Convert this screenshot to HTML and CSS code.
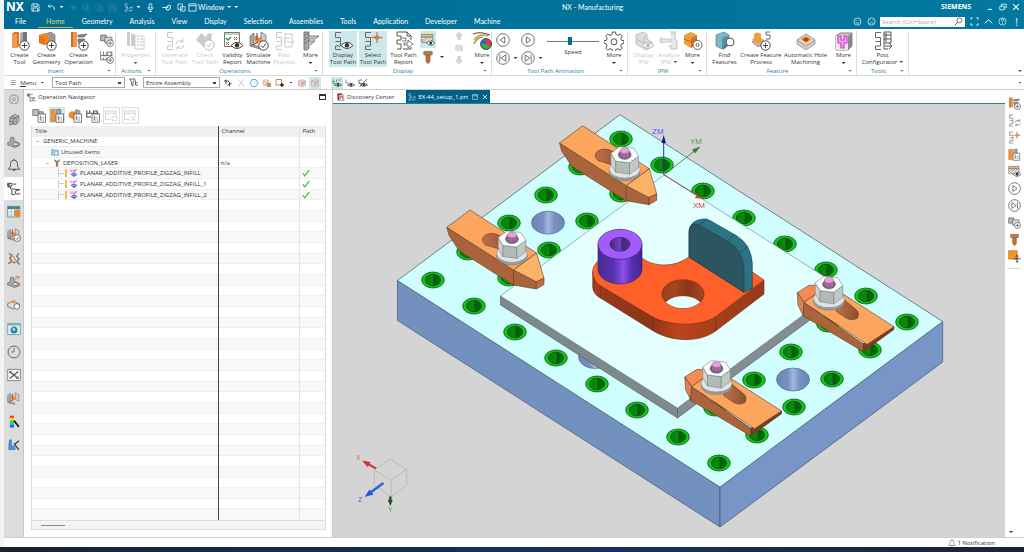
FILE: index.html
```html
<!DOCTYPE html>
<html lang="en">
<head>
<meta charset="utf-8">
<title>NX - Manufacturing</title>
<link rel="stylesheet" href="styles.css">
</head>
<body>
<svg class="sprite" aria-hidden="true">
  <symbol id="plus" viewBox="0 0 20 20"><circle cx="14.5" cy="14.5" r="4.7" fill="#fff" stroke="#444"/><path d="M14.5 11.8v5.4M11.8 14.5h5.4" stroke="#444" fill="none"/></symbol>
  <symbol id="eye" viewBox="0 0 20 20"><path d="M8 14.5q6-6.500 12 0q-6 6-12 0z" fill="#fff" stroke="#444"/><circle cx="14" cy="14.300" r="2.200" fill="#333"/></symbol>
  <symbol id="snake" viewBox="0 0 20 20"><path d="M8 1.500H2.500V6.500H7.500V10.500H2.500M7.500 10.500V15H2.500V18.500H8" fill="none" stroke="currentColor" stroke-width="1"/></symbol>
  <symbol id="tool" viewBox="0 0 20 20"><path d="M2 3l2-2h5v14l-2 2H2z" fill="#d9762a"/><path d="M2 3h5v14H2z" fill="#f09a4c"/><path d="M10 2l3-1h4v9l-3 4h-4z" fill="#aaa"/><path d="M13 1h4v9h-4z" fill="#777"/><use href="#plus"/></symbol>
  <symbol id="geometry" viewBox="0 0 20 20"><path d="M8 3l6-2 4 3v8l-6 3-4-3z" fill="#999" stroke="#666" stroke-width=".6"/><path d="M2 4l6-2 4 3v6l-4 3-6-2z" fill="#f5881f"/><path d="M2 4l6 3v7l-6-2z" fill="#e77512"/><use href="#plus"/></symbol>
  <symbol id="operation" viewBox="0 0 20 20"><path d="M2 1h6v15H2z" fill="#ee9550"/><path d="M2 1h2v15H2z" fill="#d06d25"/><path d="M9 4l9-1-3 3H9zM9 8h7l-5 3H9z" fill="#888" stroke="#555" stroke-width=".6"/><path d="M9 12h5" stroke="#666"/><use href="#plus"/></symbol>
  <symbol id="method" viewBox="0 0 20 20"><path d="M1 3h8v8H1z" fill="#bbb" stroke="#555"/><path d="M7 6h10v8H7z" fill="#ddd" stroke="#555"/><use href="#plus"/></symbol>
  <symbol id="grid" viewBox="0 0 20 20"><path d="M1 2v12M1 8h16M5 2v6h5V3M10 8V3h6v5M1 14h9M5 11v3M9 11v3M17 2v7" fill="none" stroke="#666" stroke-width="1.200"/><use href="#plus"/></symbol>
  <symbol id="properties" viewBox="0 0 20 20"><path d="M1 1h3v14H1zM5 3h4v12H5z" fill="#ccc"/><path d="M9 5h9v13H9z" fill="#fff" stroke="#ccc"/><path d="M11 8h2M11 11h2M11 14h2M14 8h3M14 11h3M14 14h3" stroke="#bbb"/></symbol>
  <symbol id="generate" viewBox="0 0 20 20"><use href="#snake"/><path d="M11 13a4 4 0 0 1 7-2V8M18 11h-3M19 14a4 4 0 0 1-7 2v3M12 16h3" fill="none" stroke="currentColor"/></symbol>
  <symbol id="check" viewBox="0 0 20 20"><path d="M1 9l5-7 5 4 2-4 4 1-1 8-7 5z" fill="#ccc"/><circle cx="14" cy="14" r="5" fill="#fff" stroke="#bbb"/><path d="M11.500 14l2 2 3-4" fill="none" stroke="#bbb"/></symbol>
  <symbol id="validity" viewBox="0 0 20 20"><path d="M1.500 1.500h15v14h-15z" fill="#fff" stroke="#777"/><path d="M2 2h14v2H2z" fill="#ccc"/><path d="M3 7l2 2 3-3" fill="none" stroke="#27a34a" stroke-width="1.500"/><path d="M11 6l3 3m0-3l-3 3M3 11l3 3m0-3l-3 3" stroke="#cf3838"/><use href="#eye"/></symbol>
  <symbol id="machine" viewBox="0 0 20 20"><path d="M1 5l4-3v12l6 2v2l-10-3z" fill="#aaa" stroke="#666" stroke-width=".7"/><path d="M12 1l5 3v9l-5-2z" fill="#ccc" stroke="#666" stroke-width=".7"/><path d="M5 6l3-2 2 3 3-2v5l-6 3z" fill="#ee8840"/><path d="M8 2v7M2 15l7-4" stroke="#555"/></symbol>
  <symbol id="simulate" viewBox="0 0 20 20"><use href="#machine"/><circle cx="14.500" cy="14.500" r="4.700" fill="#fff" stroke="#444"/><path d="M12 14.500l2 2 3-4" fill="none" stroke="#444"/></symbol>
  <symbol id="post" viewBox="0 0 20 20"><use href="#snake"/><path d="M11 3h7v6M11 3v13h7v-3M11 7h5M13 11h7l-2-2m2 2l-2 2" fill="none" stroke="currentColor"/></symbol>
  <symbol id="opmore" viewBox="0 0 20 20"><path d="M3 1h5v16l-2 2H3z" fill="#aaa" stroke="#666" stroke-width=".8"/><path d="M8 5h10l-4 3H8M8 10h6l-5 4" fill="#ccc" stroke="#666" stroke-width=".8"/><path d="M3 5l5-3M3 9l5-4M3 13l5-4" stroke="#666" stroke-width=".8"/></symbol>
  <symbol id="showpath" viewBox="0 0 20 20"><use href="#snake"/><use href="#eye"/></symbol>
  <symbol id="selectpath" viewBox="0 0 20 20"><use href="#snake"/><path d="M14 1v11M8.500 6.500h11" stroke="#e17a2d" stroke-width="1.300"/><circle cx="14" cy="6.500" r="2" fill="none" stroke="#777" stroke-width=".7"/></symbol>
  <symbol id="report" viewBox="0 0 20 20"><path d="M9 1H3v4h4v4H3v4h4v5H3M9 1h4l4 4v4M13 1v4h4M17 16v2H9" fill="none" stroke="#555"/><path d="M8 7h4v3H8M10 12h4V9l5 4-5 4v-3h-4z" fill="#fff" stroke="#555" stroke-width=".8"/></symbol>
  <symbol id="ipweye" viewBox="0 0 20 20"><path d="M1 2h16v4H1z" fill="#f5b36a" stroke="#777"/><path d="M1 6h16v9l-16-2z" fill="#eee" stroke="#777"/><path d="M2 11l5-5M2 14l9-8M7 14l8-8M12 14l5-5" stroke="#777"/><use href="#eye"/></symbol>
  <symbol id="bolt" viewBox="0 0 20 20"><path d="M4 2h12v5H4z" fill="#dd7b38" stroke="#555" stroke-width=".8"/><path d="M7 7h6v9l-2 3H9l-2-3z" fill="#cf6b29" stroke="#555" stroke-width=".6"/><path d="M4 4h12M7 9h6" stroke="#777"/></symbol>
  <symbol id="gauge" viewBox="0 0 20 20"><path d="M1 3q7-3 17 1" stroke="#444" fill="none"/><path d="M2 9q5-7 14-4" stroke="#f28c2a" stroke-width="1.500" fill="none"/><path d="M2 13q3-7 9-7" stroke="#77b539" stroke-width="1.500" fill="none"/><circle cx="14" cy="13" r="5.500" fill="#2f65d8"/><path d="M14 13V7.500A5.500 5.500 0 0 1 18.800 15.800z" fill="#e33"/><path d="M14 13L18.800 15.800A5.500 5.500 0 0 1 8.500 13z" fill="#2fae4a"/><circle cx="14" cy="13" r="5.500" fill="none" stroke="#444" stroke-width=".8"/></symbol>
  <symbol id="play" viewBox="0 0 20 20"><circle cx="10" cy="10" r="9" fill="#fff" stroke="#555" stroke-width="1.200"/><path d="M7.500 5.500v9l6.500-4.500z" fill="none" stroke="#555" stroke-width="1.200"/></symbol>
  <symbol id="next" viewBox="0 0 20 20"><circle cx="10" cy="10" r="9" fill="#fff" stroke="#555" stroke-width="1.200"/><path d="M6 5.500v9l6.500-4.500zM14.500 5v10" fill="none" stroke="#555" stroke-width="1.200"/></symbol>
  <symbol id="gear" viewBox="0 0 20 20"><path d="M8.500 1h3l.5 2.600 2 .8L16.300 3l2 2-1.500 2.300.8 2 2.400.5v2.500l-2.500.7-.8 1.900 1.400 2.200-2 2-2.100-1.400-2 .8-.5 2h-3l-.5-2-2-.8-2.300 1.400-2-2 1.400-2.200-.8-1.900L0 12.300V9.800l2.400-.5.8-2L1.700 5l2-2L6 4.400l2-.8z" fill="none" stroke="#555"/><circle cx="10" cy="10.800" r="3" fill="none" stroke="#555"/></symbol>
  <symbol id="block" viewBox="0 0 20 20"><path d="M2 4l7-3 4 2v5l5 3v5l-6 3L2 13z" fill="#ddd" stroke="#c4c4c4"/><path d="M2 8l8 4V7l3-2" fill="none" stroke="#bbb"/><path d="M8 14.500q6-6 12 0q-6 6-12 0z" fill="#f6f6f6" stroke="#bbb"/><circle cx="14" cy="14.500" r="2" fill="#bbb"/></symbol>
  <symbol id="analyze" viewBox="0 0 20 20"><path d="M1 8h11v3H1zM12 2h4v5l2 4v7h-6v-3M11 1h7M3 8v-2M3 11v2M9 15h4" fill="#e8e8e8" stroke="#c4c4c4"/></symbol>
  <symbol id="ipwmore" viewBox="0 0 20 20"><path d="M1 4l7-3 6 3v9l-6 4-7-4z" fill="#f39a45"/><path d="M8 7l6-3v9l-6 4z" fill="#d9731f"/><path d="M1 8l7 3 6-3" stroke="#b9682c" fill="none"/><circle cx="14.500" cy="14" r="4.500" fill="#fff" stroke="#666"/><circle cx="14.500" cy="14" r="1.500" fill="none" stroke="#666"/></symbol>
  <symbol id="find" viewBox="0 0 20 20"><path d="M1 4l8-3 5 3v10l-7 4-6-3z" fill="#7fb7c6" stroke="#5a7f8c" stroke-width=".7"/><path d="M7 7l7-3v10l-7 4z" fill="#4f93a6"/><circle cx="15" cy="11" r="4" fill="#fff" stroke="#555"/><path d="M12 14l-4 4" stroke="#555" stroke-width="1.500"/></symbol>
  <symbol id="feature" viewBox="0 0 20 20"><path d="M1 11l6-3 7 3-7 5z" fill="#bbb" stroke="#777" stroke-width=".7"/><path d="M3 3q3-3 7 0v4l3 2-6 4-6-4 2-2z" fill="#f09c3d"/><path d="M19 1h-4v3h4v4h-4" fill="none" stroke="#666"/><use href="#plus"/></symbol>
  <symbol id="hole" viewBox="0 0 20 20"><path d="M1 9l9-6 9 6v4l-9 6-9-6z" fill="#ccc" stroke="#888" stroke-width=".7"/><path d="M1 9l9-6 9 6-9 6z" fill="#f3d3b8" stroke="#888" stroke-width=".7"/><path d="M5 8l5-3 5 3-5 4z" fill="#eb7f35"/><ellipse cx="10" cy="8.500" rx="2.500" ry="1.600" fill="#8a4a1d"/></symbol>
  <symbol id="pocket" viewBox="0 0 20 20"><path d="M2 5l4-3h12v13l-4 4H2z" fill="#ccc" stroke="#666" stroke-width=".8"/><path d="M2 5h12v14H2z" fill="#efe4f0"/><path d="M4 5v7h3v5h3v-5h3V5h-3v4H7V5z" fill="#f3a6ea" stroke="#d33ec4" stroke-width="1.200"/><path d="M14 5l4-3v13l-4 4z" fill="#888"/></symbol>
  <symbol id="postconf" viewBox="0 0 20 20"><use href="#snake"/><path d="M11 1h7v11h-7zM11 4h7M11 8h7M13 2v9M11 12v6h4M12 15h7l-3-3m3 3l-3 3" fill="none" stroke="#555"/></symbol>
  <symbol id="cube" viewBox="0 0 20 20"><path d="M4 8l7-5 6 3v7l-4 5-4-1-5 2z" fill="#bbb" stroke="#666"/><path d="M4 8l5 2 8-4M9 10v8M7 6l6 3v8M4 13l5 2" fill="none" stroke="#555"/></symbol>
  <symbol id="part" viewBox="0 0 20 20"><path d="M1 11l4-2V4q2-2 5 0v4l8 4v3l-7 3-10-4z" fill="#aaa" stroke="#666"/><ellipse cx="12" cy="13" rx="4" ry="2" fill="#eee" stroke="#555"/></symbol>
  <symbol id="bell" viewBox="0 0 20 20"><path d="M2 16h16l-3-4V8a5 5 0 0 0-10 0v4zM8 16a2 2 0 0 0 4 0M10 1v2" fill="none" stroke="#444" stroke-width="1.200"/></symbol>
  <symbol id="opnav" viewBox="0 0 20 20"><path d="M1 2h6v4H1zM1 7h4v3M9 3h4M7 9v9h4M8 10l10 1-6 2v4h7" fill="none" stroke="#444" stroke-width="1.400"/><path d="M1 2h3v4H1z" fill="#666"/></symbol>
  <symbol id="table" viewBox="0 0 20 20"><path d="M1 2h17v15H1z" fill="#fff" stroke="#357f94"/><path d="M1 2h17v4H1z" fill="#357f94"/><path d="M6 2v15M11 2v15M1 10h17M1 14h17" stroke="#88aeb8"/><path d="M10 8l5-2 4 3v7l-5 2-4-3z" fill="#e68a36"/></symbol>
  <symbol id="web" viewBox="0 0 20 20"><path d="M1 2h18v16H1z" fill="#e4eff2" stroke="#608c99"/><path d="M1 2h18v3H1z" fill="#7bafbd"/><circle cx="10" cy="11.500" r="5" fill="#2588a3"/><path d="M8 8l4 2-1 3-3-1z" fill="#bde0e8"/></symbol>
  <symbol id="clock" viewBox="0 0 20 20"><circle cx="10" cy="10" r="8.500" fill="none" stroke="#555" stroke-width="1.200"/><path d="M10 4v6H6" fill="none" stroke="#555" stroke-width="1.200"/></symbol>
  <symbol id="wrench" viewBox="0 0 20 20"><path d="M1 2h18v16H1z" fill="#f4f4f4" stroke="#666"/><path d="M4 5l12 10M16 5L4 15" stroke="#555" stroke-width="1.600"/><circle cx="5" cy="6" r="2" fill="#777"/><circle cx="15" cy="14" r="2" fill="#777"/></symbol>
  <symbol id="robots" viewBox="0 0 20 20"><path d="M3 2l4 3-3 4 3 4-5 4M17 2l-3 4 3 4-3 4 4 4M8 15h4" fill="none" stroke="#777" stroke-width="2"/><path d="M7 4l3 4M10 8l3 5" stroke="#ee8840" stroke-width="1.600"/></symbol>
  <symbol id="partarrow" viewBox="0 0 20 20"><use href="#part"/><path d="M9 9l8-7M12 2h5v4" fill="none" stroke="#ee8840" stroke-width="1.500"/></symbol>
  <symbol id="partfind" viewBox="0 0 20 20"><path d="M1 8l8-4 9 5-9 7-8-4z" fill="#ddd" stroke="#555"/><path d="M5 6l5-4 3 4-4 2z" fill="#ee9950"/><circle cx="14" cy="12" r="4" fill="#fff" stroke="#444"/></symbol>
  <symbol id="spectrum" viewBox="0 0 20 20"><path d="M4 1h6v4H4z" fill="#f33"/><path d="M4 4h6v4H4z" fill="#fc2"/><path d="M4 8h6v4H4z" fill="#3d3"/><path d="M4 11h6v4H4z" fill="#2cc"/><path d="M4 14h6v4H4z" fill="#36f"/><path d="M10 8l7 9" stroke="#222" stroke-width="2.500"/></symbol>
  <symbol id="bluepart" viewBox="0 0 20 20"><path d="M3 2h4v8l5 2v5H2v-6z" fill="#4b8dd1"/><path d="M10 8l7 9M11 9l6-5" stroke="#345" stroke-width="2"/></symbol>
  <symbol id="orangemove" viewBox="0 0 20 20"><path d="M1 1h13v13H1z" fill="#f7941e" stroke="#b96a1c"/><path d="M14 8v11M8.500 13.500h11M12 10l2-2 2 2M12 17l2 2 2-2" stroke="#444" stroke-width="1.400" fill="none"/></symbol>
  <symbol id="pathlist" viewBox="0 0 20 20"><path d="M8 8h10v11H8z" fill="#fff" stroke="#555"/><path d="M11 10v6h2M11 13h2M14 13h2M14 16h2" stroke="#555" fill="none"/></symbol>
  <symbol id="nav1" viewBox="0 0 20 20"><path d="M1 2h8v8H1zM9 5h6v6H9z" fill="#bbb" stroke="#666"/><use href="#pathlist"/></symbol>
  <symbol id="nav2" viewBox="0 0 20 20"><path d="M1 2h6v16H1z" fill="#ee9140" stroke="#b9681f" stroke-width=".6"/><path d="M9 2h5v7H9z" fill="#aaa" stroke="#666"/><use href="#pathlist"/></symbol>
  <symbol id="nav3" viewBox="0 0 20 20"><path d="M1 7l4-3 3 1 3-3 5 2v8l-8 4-7-4z" fill="#f08c2e"/><path d="M11 2l5 2v5h-5z" fill="#aaa" stroke="#777"/><use href="#pathlist"/></symbol>
  <symbol id="nav4" viewBox="0 0 20 20"><path d="M1 3v10M1 7h16M5 3v4h5V4h5v4M1 12h6" fill="none" stroke="#555" stroke-width="1.500"/><use href="#pathlist"/></symbol>
  <symbol id="nav5" viewBox="0 0 20 20"><path d="M2 4h14v7M2 4v11h7M2 7h14" fill="none" stroke="#c4c4c4"/><circle cx="14" cy="14" r="3.500" fill="none" stroke="#c4c4c4"/></symbol>
  <symbol id="nav6" viewBox="0 0 20 20"><path d="M2 4h14v6M2 4v11h7M2 7h14M11 11l6 6m0-6l-6 6" fill="none" stroke="#c4c4c4"/></symbol>
  <symbol id="save" viewBox="0 0 20 20"><path d="M2 2h13l3 3v13H2zM6 2v6h8V2M5 18v-7h10v7" fill="none" stroke="currentColor" stroke-width="1.600"/></symbol>
  <symbol id="undo" viewBox="0 0 20 20"><path d="M7 3L3 7l4 4M3 7h9q6 1 4 9" fill="none" stroke="currentColor" stroke-width="1.800"/></symbol>
  <symbol id="copy" viewBox="0 0 20 20"><path d="M2 2h10v12H2zM8 8h10v10H8z" fill="none" stroke="currentColor" stroke-width="1.600"/></symbol>
  <symbol id="mic" viewBox="0 0 20 20"><path d="M7 2h6v9H7zM4 9q0 6 6 6t6-6M10 15v4M7 19h6" fill="none" stroke="currentColor" stroke-width="1.600"/></symbol>
  <symbol id="hand" viewBox="0 0 20 20"><path d="M1 10h7l7-5q4-1 4 4-1 6-6 7-5 0-4-5 2-3 5-1" fill="none" stroke="currentColor" stroke-width="2.200"/></symbol>
  <symbol id="window" viewBox="0 0 20 20"><path d="M2 2h16v16H2zM2 6h16" fill="none" stroke="currentColor" stroke-width="1.700"/></symbol>
  <symbol id="cut" viewBox="0 0 20 20"><path d="M3 10h14M10 3v14M5 5l10 10" stroke="currentColor" stroke-width="1.600"/></symbol>
  <symbol id="smile" viewBox="0 0 20 20"><circle cx="10" cy="10" r="8" fill="none" stroke="currentColor" stroke-width="1.500"/><path d="M6 7.500h2M12 7.500h2M5.500 12q4.500 4 9 0" fill="none" stroke="currentColor" stroke-width="1.500"/></symbol>
  <symbol id="sad" viewBox="0 0 20 20"><circle cx="10" cy="10" r="8" fill="none" stroke="currentColor" stroke-width="1.500"/><path d="M6 7.500h2M12 7.500h2M5.500 14.500q4.500-5 9 0" fill="none" stroke="currentColor" stroke-width="1.500"/></symbol>
  <symbol id="glass" viewBox="0 0 20 20"><circle cx="12" cy="7.500" r="5.500" fill="none" stroke="#444" stroke-width="1.600"/><path d="M8 12l-6 6" stroke="#444" stroke-width="2"/></symbol>
  <symbol id="full" viewBox="0 0 20 20"><path d="M2 6V2h4M14 2h4v4M18 14v4h-4M6 18H2v-4" fill="none" stroke="currentColor" stroke-width="2"/></symbol>
  <symbol id="up" viewBox="0 0 20 20"><path d="M2 14l8-8 8 8" fill="none" stroke="currentColor" stroke-width="2.200"/></symbol>
  <symbol id="help" viewBox="0 0 20 20"><circle cx="10" cy="10" r="8" fill="none" stroke="currentColor" stroke-width="1.500"/><path d="M7 8q0-3 3-3t3 2.500q0 1.500-3 3V12M10 13.500v2" fill="none" stroke="currentColor" stroke-width="1.600"/></symbol>
  <symbol id="close" viewBox="0 0 20 20"><path d="M3 3l14 14M17 3L3 17" stroke="currentColor" stroke-width="2.600"/></symbol>
  <symbol id="min" viewBox="0 0 20 20"><path d="M5 16h10" stroke="currentColor" stroke-width="2.500"/></symbol>
  <symbol id="restore" viewBox="0 0 20 20"><path d="M6 7V3h12v9h-4M2 8h11v9H2z" fill="none" stroke="currentColor" stroke-width="2"/></symbol>
  <symbol id="filter" viewBox="0 0 20 20"><path d="M1 2h11L8 8v8l-3-2V8zM13 5v9h5M13 9h4" fill="none" stroke="#444" stroke-width="1.600"/></symbol>
  <symbol id="snap" viewBox="0 0 20 20"><path d="M2 6h9M6 3v9M10 6l4 4M9 14l8-3M13 8v9" stroke="#444" stroke-width="2"/></symbol>
  <symbol id="wand" viewBox="0 0 20 20"><path d="M3 3l4 4M15 3L5 17M8 8l9 9" stroke="#ccc" stroke-width="2"/></symbol>
  <symbol id="hex" viewBox="0 0 20 20"><path d="M6 3h8l4 7-4 7H6l-4-7z" fill="#f4fbff" stroke="#3aa0cf" stroke-width="1.600"/></symbol>
  <symbol id="cubes" viewBox="0 0 20 20"><path d="M2 6l6-3 6 3v7l-6 3-6-3z" fill="#f3e3d6" stroke="#b98a68"/><path d="M2 6l6 3 6-3M8 9v7" fill="none" stroke="#b98a68"/><path d="M11 11h6v6h-6z" fill="#ef8c35" stroke="#555"/></symbol>
  <symbol id="box" viewBox="0 0 20 20"><path d="M2 3h11v11H2z" fill="#fff" stroke="#e28138" stroke-width="2"/><path d="M14 10v8M10 14h8" stroke="#333" stroke-width="3"/></symbol>
  <symbol id="iso" viewBox="0 0 20 20"><path d="M3 6l7-3 7 3v9l-7 3-7-3z" fill="#ddd" stroke="#999"/><path d="M3 6l7 3 7-3" fill="none" stroke="#999"/><path d="M8 8l7-2v7l-7 3z" fill="#e6ad8e"/></symbol>
  <symbol id="pathseye" viewBox="0 0 20 20"><path d="M2 3v8h5M2 7h4M9 3v5M12 4h6" fill="none" stroke="#2b8a70" stroke-width="1.500"/><path d="M5 14q7-7 14 0q-7 6-14 0z" fill="#fff" stroke="#333" stroke-width="1.500"/><circle cx="12" cy="13.500" r="2.500" fill="#333"/></symbol>
  <symbol id="patheye" viewBox="0 0 20 20"><path d="M2 3v7h5" fill="none" stroke="#2b8a70" stroke-width="1.500"/><path d="M5 14q7-7 14 0q-7 6-14 0z" fill="#fff" stroke="#333" stroke-width="1.500"/><circle cx="12" cy="13.500" r="2.500" fill="#333"/></symbol>
  <symbol id="hideeye" viewBox="0 0 20 20"><path d="M2 4v7h5M3 4h5M18 2L3 18" fill="none" stroke="#444" stroke-width="1.600"/><path d="M5 14q7-7 14 0q-7 6-14 0z" fill="none" stroke="#333" stroke-width="1.500"/><circle cx="12" cy="13.500" r="2.500" fill="#333"/></symbol>
  <symbol id="disc" viewBox="0 0 20 20"><path d="M1 1h12v17H1z" fill="#b4213c"/><path d="M5 5h12v14H5z" fill="#eee" stroke="#773344"/><path d="M8 16V9h6v7" fill="none" stroke="#933" stroke-width="2"/></symbol>
  <symbol id="folder" viewBox="0 0 20 20"><path d="M1 4h7l2 2h9v12H1z" fill="#9fd0e2" stroke="#3c8198"/><path d="M9 8h8v10H9z" fill="#e7f4f8" stroke="#3c8198"/></symbol>
  <symbol id="laser" viewBox="0 0 20 20"><path d="M4 1v4l4 3v11h4V8l4-3V1l-4 4H8z" fill="#a06a40" stroke="#553" stroke-width=".8"/></symbol>
  <symbol id="additive" viewBox="0 0 20 20"><path d="M2 1v5h4M8 1v5h4V1M14 6V2h4" fill="none" stroke="#e04a9a" stroke-width="1.800"/><path d="M2 11l8 5 8-5v3l-8 6-8-6z" fill="#2b53d6"/><path d="M4 11l6-3 6 3-6 4z" fill="#7a68e2"/></symbol>
  <symbol id="done" viewBox="0 0 20 20"><path d="M2 11l5 6L18 3" fill="none" stroke="#35bf43" stroke-width="3"/></symbol>
  <symbol id="ghostup" viewBox="0 0 20 20"><path d="M10 2l7 7h-4v8H7V9H3z" fill="#d4d4d4" stroke="#c0c0c0"/></symbol>
  <symbol id="ghostbox" viewBox="0 0 20 20"><path d="M3 5l9-1 5 3v8l-9 1-5-3z" fill="#ddd" stroke="#c4c4c4"/></symbol>
</svg>

<div class="app">
  <header class="top">
    <div class="titlebar">
      <div class="quick">
        <span class="logo">NX</span>
        <button class="q" aria-label="Save"><svg><use href="#save"/></svg></button>
        <button class="q undo" aria-label="Undo"><svg><use href="#undo"/></svg><i class="caret"></i></button>
        <button class="q dim" aria-label="Cut"><svg><use href="#cut"/></svg></button>
        <button class="q dim" aria-label="Copy"><svg><use href="#copy"/></svg></button>
        <button class="q dim" aria-label="Paste"><svg><use href="#copy"/></svg></button>
        <button class="q dim" aria-label="Repeat"><svg><use href="#save"/></svg></button>
        <button class="q undo" aria-label="Tool path"><svg><use href="#generate"/></svg><i class="caret"></i></button>
        <button class="q" aria-label="Voice"><svg><use href="#mic"/></svg></button>
        <button class="q wide" aria-label="Touch"><svg><use href="#hand"/></svg></button>
        <button class="q" aria-label="Switch window"><svg><use href="#copy"/></svg></button>
        <button class="winmenu"><svg><use href="#window"/></svg>Window<i class="caret"></i></button>
        <i class="caret"></i>
      </div>
      <div class="apptitle">NX - Manufacturing</div>
      <div class="brand">SIEMENS</div>
      <button class="wc" aria-label="Minimize"><svg><use href="#min"/></svg></button>
      <button class="wc" aria-label="Restore"><svg><use href="#restore"/></svg></button>
      <button class="wc" aria-label="Close"><svg><use href="#close"/></svg></button>
    </div>
    <div class="tabbar">
      <nav class="tabs">
        <a href="#" class="file">File</a><a href="#" class="on">Home</a><a href="#">Geometry</a><a href="#">Analysis</a><a href="#">View</a><a href="#">Display</a><a href="#">Selection</a><a href="#">Assemblies</a><a href="#">Tools</a><a href="#">Application</a><a href="#">Developer</a><a href="#">Machine</a>
      </nav>
      <button class="h" aria-label="Like"><svg><use href="#smile"/></svg></button>
      <button class="h" aria-label="Dislike"><svg><use href="#sad"/></svg></button>
      <label class="search"><input type="text" aria-label="Search" placeholder="Search (Ctrl+Space)"><svg><use href="#glass"/></svg></label>
      <button class="h" aria-label="Full screen"><svg><use href="#full"/></svg></button>
      <button class="h" aria-label="Minimize ribbon"><svg><use href="#up"/></svg></button>
      <button class="h" aria-label="Help"><svg><use href="#help"/></svg></button>
      <button class="h last" aria-label="Alerts">!</button>
    </div>
  </header>

  <div class="ribbon">
    <section class="group g-insert">
      <div class="body">
        <button class="rb"><svg><use href="#tool"/></svg>Create<br>Tool</button>
        <button class="rb"><svg><use href="#geometry"/></svg>Create<br>Geometry</button>
        <button class="rb"><svg><use href="#operation"/></svg>Create<br>Operation</button>
        <div class="stack"><button aria-label="Create Method"><svg><use href="#method"/></svg></button><button aria-label="Create Program"><svg><use href="#grid"/></svg></button></div>
      </div>
      <footer><span>Insert</span><i class="caret"></i></footer>
    </section>
    <section class="group g-actions">
      <div class="body"><button class="rb off"><svg><use href="#properties"/></svg>Properties<i class="caret"></i></button></div>
      <footer><span>Actions</span><i class="caret"></i></footer>
    </section>
    <section class="group g-operations">
      <div class="body">
        <button class="rb off"><svg><use href="#generate"/></svg>Generate<br>Tool Path</button>
        <button class="rb off"><svg><use href="#check"/></svg>Check<br>Tool Path</button>
        <button class="rb"><svg><use href="#validity"/></svg>Validity<br>Report</button>
        <button class="rb"><svg><use href="#simulate"/></svg>Simulate<br>Machine</button>
        <button class="rb off"><svg><use href="#post"/></svg>Post<br>Process</button>
        <button class="rb"><svg><use href="#opmore"/></svg>More<i class="caret"></i></button>
      </div>
      <footer><span>Operations</span><i class="caret"></i></footer>
    </section>
    <section class="group g-display">
      <div class="body">
        <button class="rb lit"><svg><use href="#showpath"/></svg>Display<br>Tool Path</button>
        <button class="rb lit"><svg><use href="#selectpath"/></svg>Select<br>Tool Path</button>
        <button class="rb"><svg><use href="#report"/></svg>Tool Path<br>Report</button>
        <div class="stack"><button class="lit" aria-label="Show IPW"><svg><use href="#ipweye"/></svg></button><button aria-label="Show tool"><svg><use href="#bolt"/></svg></button></div>
        <i class="caret low"></i>
        <div class="arrows"><svg><use href="#ghostup"/></svg><svg><use href="#ghostbox"/></svg><svg class="down"><use href="#ghostup"/></svg></div>
        <button class="rb"><svg><use href="#gauge"/></svg>More<i class="caret"></i></button>
      </div>
      <footer><span>Display</span><i class="caret"></i></footer>
    </section>
    <section class="group g-animation">
      <div class="body">
        <div class="player">
          <button aria-label="Play backward"><svg class="flip"><use href="#play"/></svg></button><i></i>
          <button aria-label="Play"><svg><use href="#play"/></svg></button><i></i>
          <button aria-label="Previous"><svg class="flip"><use href="#next"/></svg></button><i class="caret"></i>
          <button aria-label="Next"><svg><use href="#next"/></svg></button><i class="caret"></i>
        </div>
        <label class="speed"><input type="range" min="0" max="100" value="44">Speed</label>
        <button class="rb"><svg><use href="#gear"/></svg>More<i class="caret"></i></button>
      </div>
      <footer><span>Tool Path Animation</span><i class="caret"></i></footer>
    </section>
    <section class="group g-ipw">
      <div class="body">
        <button class="rb off"><svg><use href="#block"/></svg>Display<br>IPW</button>
        <button class="rb off"><svg><use href="#analyze"/></svg>Analyze<br><span>IPW<i class="caret in"></i></span></button>
        <button class="rb"><svg><use href="#ipwmore"/></svg>More<i class="caret"></i></button>
      </div>
      <footer><span>IPW</span><i class="caret"></i></footer>
    </section>
    <section class="group g-feature">
      <div class="body">
        <button class="rb"><svg><use href="#find"/></svg>Find<br>Features</button>
        <button class="rb"><svg><use href="#feature"/></svg>Create Feature<br>Process</button>
        <button class="rb"><svg><use href="#hole"/></svg>Automatic Hole<br>Machining</button>
        <button class="rb"><svg><use href="#pocket"/></svg>More<i class="caret"></i></button>
      </div>
      <footer><span>Feature</span><i class="caret"></i></footer>
    </section>
    <section class="group g-tools">
      <div class="body"><button class="rb"><svg><use href="#postconf"/></svg>Post<br><span>Configurator<i class="caret in"></i></span></button></div>
      <footer><span>Tools</span><i class="caret"></i></footer>
    </section>
    <i class="caret end"></i>
  </div>

  <div class="toolbar">
    <button class="menu"><span class="burger">☰</span><span><u>M</u>enu</span><i class="caret"></i></button>
    <select class="sel1" aria-label="Selection type"><option>Tool Path</option></select>
    <svg class="ti filt"><use href="#filter"/></svg>
    <select class="sel2" aria-label="Selection scope"><option>Entire Assembly</option></select>
    <div class="tis">
      <button aria-label="Snap"><svg><use href="#snap"/></svg></button>
      <button aria-label="Deselect"><svg><use href="#wand"/></svg></button>
      <button aria-label="Polygon"><svg><use href="#hex"/></svg></button>
      <button aria-label="Find in navigator"><svg><use href="#cubes"/></svg></button>
      <button aria-label="Box"><svg><use href="#box"/></svg></button>
      <i class="caret"></i>
      <button aria-label="Shaded"><svg><use href="#iso"/></svg></button>
      <button class="lit" aria-label="Edges"><svg><use href="#iso"/></svg></button>
      <button class="lit apart" aria-label="Show all paths"><svg><use href="#pathseye"/></svg></button>
      <button aria-label="Show path"><svg><use href="#patheye"/></svg></button>
      <button aria-label="Hide path"><svg><use href="#hideeye"/></svg></button>
    </div>
    <i class="caret end"></i>
  </div>

  <main class="main">
    <nav class="rail">
      <button aria-label="Settings"><svg><use href="#gear"/></svg></button>
      <button aria-label="Assembly Navigator"><svg><use href="#cube"/></svg></button>
      <button aria-label="Part Navigator"><svg><use href="#part"/></svg></button>
      <button aria-label="Notifications"><svg><use href="#bell"/></svg></button>
      <button class="on" aria-label="Operation Navigator"><svg><use href="#opnav"/></svg></button>
      <button aria-label="Feature Navigator"><svg><use href="#table"/></svg></button>
      <button aria-label="Machine tools"><svg><use href="#simulate"/></svg></button>
      <button aria-label="Robots"><svg><use href="#robots"/></svg></button>
      <button aria-label="Constraints"><svg><use href="#partarrow"/></svg></button>
      <button aria-label="Reuse Library"><svg><use href="#partfind"/></svg></button>
      <button aria-label="Web browser"><svg><use href="#web"/></svg></button>
      <button aria-label="History"><svg><use href="#clock"/></svg></button>
      <button aria-label="Process Studio"><svg><use href="#wrench"/></svg></button>
      <button aria-label="Machining wizards"><svg><use href="#machine"/></svg></button>
      <button aria-label="Visual reporting"><svg><use href="#spectrum"/></svg></button>
      <button aria-label="System scenes"><svg><use href="#bluepart"/></svg></button>
    </nav>

    <section class="panel">
      <header><svg><use href="#opnav"/></svg><h1>Operation Navigator</h1><button aria-label="Maximize"></button></header>
      <div class="views">
        <button aria-label="Program order view"><svg><use href="#nav1"/></svg></button>
        <button class="lit" aria-label="Machine tool view"><svg><use href="#nav2"/></svg></button>
        <button aria-label="Geometry view"><svg><use href="#nav3"/></svg></button>
        <button aria-label="Method view"><svg><use href="#nav4"/></svg></button>
        <button class="box" aria-label="Properties"><svg><use href="#nav5"/></svg></button>
        <button class="box" aria-label="Delete"><svg><use href="#nav6"/></svg></button>
      </div>
      <div class="tree">
      <table>
        <thead><tr><th class="c1">Title</th><th class="c2">Channel</th><th class="c3">Path</th></tr></thead>
        <tbody>
          <tr><td><div class="n l0"><i class="exp">–</i>GENERIC_MACHINE</div></td><td></td><td></td></tr>
          <tr><td><div class="n l1"><svg><use href="#folder"/></svg>Unused Items</div></td><td></td><td></td></tr>
          <tr><td><div class="n l2"><i class="exp">–</i><svg><use href="#laser"/></svg>DEPOSITION_LASER</div></td><td>n/a</td><td></td></tr>
          <tr><td><div class="n l3"><b></b><svg><use href="#additive"/></svg>PLANAR_ADDITIVE_PROFILE_ZIGZAG_INFILL</div></td><td></td><td><svg><use href="#done"/></svg></td></tr>
          <tr><td><div class="n l3"><b></b><svg><use href="#additive"/></svg>PLANAR_ADDITIVE_PROFILE_ZIGZAG_INFILL_1</div></td><td></td><td><svg><use href="#done"/></svg></td></tr>
          <tr><td><div class="n l3"><b></b><svg><use href="#additive"/></svg>PLANAR_ADDITIVE_PROFILE_ZIGZAG_INFILL_2</div></td><td></td><td><svg><use href="#done"/></svg></td></tr>
          <tr><td></td><td></td><td></td></tr><tr><td></td><td></td><td></td></tr><tr><td></td><td></td><td></td></tr>
          <tr><td></td><td></td><td></td></tr><tr><td></td><td></td><td></td></tr><tr><td></td><td></td><td></td></tr>
          <tr><td></td><td></td><td></td></tr><tr><td></td><td></td><td></td></tr><tr><td></td><td></td><td></td></tr>
          <tr><td></td><td></td><td></td></tr><tr><td></td><td></td><td></td></tr><tr><td></td><td></td><td></td></tr>
          <tr><td></td><td></td><td></td></tr><tr><td></td><td></td><td></td></tr><tr><td></td><td></td><td></td></tr>
          <tr><td></td><td></td><td></td></tr><tr><td></td><td></td><td></td></tr><tr><td></td><td></td><td></td></tr>
          <tr><td></td><td></td><td></td></tr><tr><td></td><td></td><td></td></tr><tr><td></td><td></td><td></td></tr>
          <tr><td></td><td></td><td></td></tr><tr><td></td><td></td><td></td></tr><tr><td></td><td></td><td></td></tr>
          <tr><td></td><td></td><td></td></tr><tr><td></td><td></td><td></td></tr><tr><td></td><td></td><td></td></tr>
          <tr><td></td><td></td><td></td></tr><tr><td></td><td></td><td></td></tr><tr><td></td><td></td><td></td></tr>
        </tbody>
      </table>
      </div>
      <div class="hscroll"><span></span></div>
    </section>

    <section class="view">
      <div class="doctabs">
        <a href="#" class="doc"><svg><use href="#disc"/></svg>Discovery Center</a>
        <a href="#" class="doc on"><svg><use href="#generate"/></svg>EX-44_setup_1.prt<svg class="sm"><use href="#window"/></svg><svg class="sm"><use href="#close"/></svg></a>
      </div>
      <svg class="scene" viewBox="333 104 672 433" preserveAspectRatio="xMidYMid meet" role="img" aria-label="Machining setup">
        <defs>
          <linearGradient id="gHole"><stop offset="0" stop-color="#087a0c"/><stop offset=".45" stop-color="#0b8a0f"/><stop offset=".6" stop-color="#065c09"/><stop offset="1" stop-color="#066b0a"/></linearGradient>
          <linearGradient id="gBore"><stop offset="0" stop-color="#6d86b5"/><stop offset=".35" stop-color="#7890bf"/><stop offset=".5" stop-color="#a3b7df"/><stop offset=".7" stop-color="#7990c0"/><stop offset="1" stop-color="#6c86b6"/></linearGradient>
          <linearGradient id="gPurple"><stop offset="0" stop-color="#4a2c94"/><stop offset=".35" stop-color="#5731ae"/><stop offset=".58" stop-color="#8951e8"/><stop offset=".75" stop-color="#5a30b4"/><stop offset="1" stop-color="#43268a"/></linearGradient>
          <linearGradient id="gInner"><stop offset="0" stop-color="#442679"/><stop offset=".5" stop-color="#7644c8"/><stop offset=".6" stop-color="#462781"/><stop offset="1" stop-color="#52309b"/></linearGradient>
          <linearGradient id="gRust"><stop offset="0" stop-color="#97401f"/><stop offset=".3" stop-color="#a9441f"/><stop offset=".6" stop-color="#8b3518"/><stop offset="1" stop-color="#a64622"/></linearGradient>
          <linearGradient id="gRim" gradientUnits="userSpaceOnUse" x1="592" y1="0" x2="764" y2="0"><stop offset="0" stop-color="#ae4420"/><stop offset=".08" stop-color="#96391b"/><stop offset=".35" stop-color="#8c3518"/><stop offset=".5" stop-color="#b9451d"/><stop offset=".72" stop-color="#a63e1b"/><stop offset="1" stop-color="#983b1c"/></linearGradient>
          <linearGradient id="gSlot"><stop offset="0" stop-color="#bd7048"/><stop offset=".6" stop-color="#a35d39"/><stop offset="1" stop-color="#8a4c2f"/></linearGradient>
          <clipPath id="cHole"><ellipse cx="683" cy="294" rx="21" ry="14.300"/></clipPath>
          <g id="h"><ellipse rx="11.300" ry="8" fill="#12c51b" stroke="#14551b" stroke-width=".8"/><ellipse rx="7.600" ry="5.800" fill="url(#gHole)" stroke="#06500a" stroke-width=".8"/></g>
          <g id="nut" stroke="#6d7473" stroke-width=".5">
            <ellipse cy="17" rx="15.500" ry="9" fill="#979e9d"/><ellipse cy="14.500" rx="15.500" ry="9" fill="#e1e4e4"/>
            <path d="M-13.800-1.500V9L-9 17.500V6.500z" fill="#cfd3d2"/><path d="M-9 6.500v11l13.800 2V8z" fill="#b0bab7"/><path d="M4.800 8v11.500l9-6.500V1.500z" fill="#bfcac7"/>
            <path d="M4.800 8L-9 6.500-13.800-1.500-4.800-8 9-6.500 13.800 1.500z" fill="#f8fafb"/>
            <ellipse cy="0" rx="6.500" ry="4.700" fill="#686268"/><path d="M-4.500-4V1q4.500 5 9 0V-4z" fill="#b667a8"/><path d="M-2-2v5M1-2v5" stroke="#7d4271"/><ellipse cy="-4" rx="4.500" ry="2.800" fill="#f09be0"/>
          </g>
          <g id="clampL" stroke="#5d3b24" stroke-width=".6" stroke-linejoin="round">
            <path d="M559.500 143L626.300 185.700 649 197.500V204.700L626 200.700 571.700 166.300 561.700 151z" fill="#a9643b"/>
            <path d="M582.700 125.700L649.300 168.700 626.300 185.700 559.500 143z" fill="#fba55f"/>
            <path d="M626.300 185.700L649.300 168.700 656.700 194 649 197.500z" fill="#fdb168"/>
            <path d="M649 197.500L656.700 194V200.300L649 204.700z" fill="#bd7040"/><path d="M626.300 185.700v15"/>
            <path d="M611 164.500L598 160.500Q593 156 597 151.500Q604 147 612 151L625 160V170z" fill="url(#gSlot)"/>
            <use href="#nut" x="624.700" y="154.700"/>
          </g>
          <g id="clampR" stroke="#5d3b24" stroke-width=".6" stroke-linejoin="round">
            <path d="M797.300 292.700L809 285.300 829 285 804 302.300z" fill="#f38b52"/>
            <path d="M797.300 292.700L804 302.300 803.300 316 798 305z" fill="#d98455"/>
            <path d="M804 302.300L863.500 344 863.300 351.700 803.300 316z" fill="#a9643b"/>
            <path d="M863.500 344L894 326.700V329.500L863.300 351.700z" fill="#743f24"/>
            <path d="M804 302.300L829 285 894 326.700 867 344.500z" fill="#fba55f"/>
            <path d="M836 311L846 318Q852 321.500 857.500 318Q860 313 856 309.500L842 298z" fill="url(#gSlot)"/>
            <use href="#nut" x="829" y="284.300"/>
          </g>
        </defs>
        <path d="M397.500 280.500L720 487V527L397.500 320.500z" fill="#7391bf" stroke="#46556f" stroke-width=".7"/>
        <path d="M720 487L942.700 321.500V362L720 527z" fill="#7895c7" stroke="#46556f" stroke-width=".7"/>
        <path d="M620 114.700L942.700 321.500 720 487 397.500 280.500z" fill="#d0fefe" stroke="#4d6b7b" stroke-width=".8"/>
        <ellipse cx="548" cy="222.700" rx="16.500" ry="11.500" fill="url(#gBore)" stroke="#4c6087" stroke-width=".6"/>
        <ellipse cx="793" cy="379.500" rx="16.500" ry="11.500" fill="url(#gBore)" stroke="#4c6087" stroke-width=".6"/>
        <ellipse cx="595" cy="357" rx="16.500" ry="11.500" fill="url(#gBore)" stroke="#4c6087" stroke-width=".6"/>
        <use href="#h" x="621" y="139"/><use href="#h" x="662" y="165"/><use href="#h" x="703" y="191"/><use href="#h" x="744" y="218"/><use href="#h" x="785" y="244"/><use href="#h" x="826" y="270"/><use href="#h" x="866" y="296"/><use href="#h" x="907" y="322"/>
        <use href="#h" x="580" y="167"/><use href="#h" x="621" y="194"/><use href="#h" x="546" y="195"/><use href="#h" x="509" y="223"/><use href="#h" x="587" y="221"/><use href="#h" x="549" y="250"/><use href="#h" x="468" y="252"/><use href="#h" x="509" y="278"/>
        <use href="#h" x="433" y="280"/><use href="#h" x="474" y="306"/><use href="#h" x="515" y="332"/><use href="#h" x="556" y="358"/><use href="#h" x="597" y="384"/><use href="#h" x="637" y="410"/><use href="#h" x="678" y="437"/><use href="#h" x="719" y="463"/>
        <use href="#h" x="828" y="324"/><use href="#h" x="870" y="350"/><use href="#h" x="791" y="352"/><use href="#h" x="832" y="379"/><use href="#h" x="754" y="380"/><use href="#h" x="794" y="407"/><use href="#h" x="715" y="408"/><use href="#h" x="757" y="435"/>
        <path d="M500.500 296L677.500 408V418L500.500 305z" fill="#7d8a8b" stroke="#4d5555" stroke-width=".6"/>
        <path d="M677.500 408L841 287V297L677.500 418z" fill="#838d92" stroke="#4d5555" stroke-width=".6"/>
        <path d="M664 175L841 287 677.500 408 500.500 296z" fill="#e3ffff" stroke="#6d8287" stroke-width=".6"/>

        <g stroke="#6b2d17" stroke-width=".6">
          <path d="M592.700 271.700V287C593 292 596 296 602 299L653.300 331C672 342 699 343 715.700 331L764 294V280L715.700 316.700H653.300L600 285.500z" fill="url(#gRim)"/>
          <path d="M764 280L715.700 316.700C700 327 670 326 653.300 317.300L600 285.500C594 281 592.700 276 592.700 271.700 592.700 266 597 261 603 257L641.700 257.700C654 267.500 675 267.500 688.700 257L752 271.700z" fill="#ff6029"/>
          <path d="M653.300 317.300V331M715.700 316.700V331M600.500 285.800V298M594 277v14"/>
          <ellipse cx="683" cy="294" rx="21" ry="14.300" fill="url(#gRust)"/>
          <ellipse cx="683" cy="310" rx="21" ry="14.300" fill="#e3ffff" clip-path="url(#cHole)"/>
        </g>
        <g stroke="#2f1f68" stroke-width=".6">
          <path d="M598 244.300V269A22 15 0 0 0 642 269V244.300z" fill="url(#gPurple)"/>
          <ellipse cx="620" cy="244.300" rx="22" ry="15" fill="#a35cfb"/><ellipse cx="620" cy="244.300" rx="10" ry="7" fill="url(#gInner)"/>
        </g>
        <g stroke="#183d49" stroke-width=".6">
          <path d="M689 257V232Q690 220 703 219Q707 218.500 710 220.500L737 236Q751 245 752.300 263V288.300L744 292.300z" fill="#2b7385"/>
          <path d="M689 257V231Q690 222 698 224.500L728 241.500Q742 250 744 267V292.300z" fill="#2b5561"/>
          <path d="M699 224.500l8-5.500M727 241l8-6.500M740 252.500l8.500-6.500"/>
        </g>
        <use href="#clampL"/><use href="#clampL" x="-112.700" y="84.300"/>
        <use href="#clampR"/><use href="#clampR" x="-112.500" y="84.300"/>
        <g fill="none" stroke-width="1">
          <path d="M663.700 174.500V138" stroke="#25349d"/><path d="M661.500 143l2.200-8 2.200 8z" fill="#101c86"/>
          <path d="M664 175l33-26" stroke="#4b8d65"/><path d="M700.500 146.500l-8.500 3 3 4z" fill="#32843b"/>
          <path d="M663.700 174.500L698 196" stroke="#9b4a51"/><path d="M703 199l-8-1 2-4z" fill="#e53a2e"/>
        </g>
        <g class="axis"><text x="652" y="134" fill="#505ff0">ZM</text><text x="690" y="144" fill="#559a55">YM</text><text x="693" y="208" fill="#c8493f">XM</text></g>
        <g fill="none" stroke="#b4b4b4" stroke-width=".8"><path d="M390.300 459L406.700 469.300V485.300L391 496.700 374.300 485.300V470zM374.300 470L391 480.300 406.700 469.300M391 480.300v16"/></g>
        <path d="M376 468.500l-8-4.500" stroke="#cf3f47" stroke-width="2.400"/><path d="M362 460.500l8.500 1.500-3 5z" fill="#cb3139"/>
        <path d="M383.500 483l-13 9.500" stroke="#2d61dc" stroke-width="2.600"/><path d="M364.500 497l5-7.500 4 5z" fill="#2459d8"/>
        <path d="M390.300 496.500v4" stroke="#275b2b" stroke-width="2.600"/><path d="M387.800 500h5l-2.500 6z" fill="#1f5424"/>
        <g class="axis small"><text x="356" y="460" fill="#dc5e67">X</text><text x="358" y="502" fill="#5468d8">Z</text><text x="388" y="512" fill="#619866">Y</text></g>
      </svg>
    </section>

    <aside class="side">
      <button aria-label="Create Operation"><svg><use href="#operation"/></svg></button>
      <button aria-label="Generate"><svg><use href="#generate"/></svg></button>
      <button aria-label="Select Tool Path"><svg><use href="#selectpath"/></svg></button>
      <button aria-label="Edit tool"><svg><use href="#nav2"/></svg></button>
      <button aria-label="Show IPW"><svg><use href="#ipweye"/></svg></button>
      <button aria-label="Play"><svg><use href="#play"/></svg></button>
      <button aria-label="Next"><svg><use href="#next"/></svg></button>
      <button aria-label="Create Method"><svg><use href="#method"/></svg></button>
      <button aria-label="Show tool"><svg><use href="#bolt"/></svg></button>
      <button aria-label="Move object"><svg><use href="#orangemove"/></svg></button>
      <hr><i class="caret"></i>
    </aside>
  </main>

  <footer class="status"><svg><use href="#bell"/></svg><span>1 Notification</span></footer>
</div>
<div class="taskbar"></div>
</body>
</html>
```
FILE: styles.css
```css
* { box-sizing: border-box; }
html, body { height: 100%; }
body {
  margin: 0;
  display: flex;
  flex-direction: column;
  background: #f3f3f3;
  color: #333;
  font: 6px/8px "Open Sans", "Noto Sans", sans-serif;
  overflow: hidden;
}
.sprite { position: absolute; width: 0; height: 0; }
button { border: 0; padding: 0; margin: 0; background: none; color: inherit; font: inherit; display: flex; align-items: center; justify-content: center; }
a { color: inherit; text-decoration: none; }
svg { display: block; flex: none; }
.caret { display: block; flex: none; width: 4px; height: 2px; background: currentColor; clip-path: polygon(0 0, 100% 0, 50% 100%); }
.lit { background: #cde8ea; }

.app { flex: 1; min-height: 0; margin-left: 4px; display: flex; flex-direction: column; background: #fff; }

/* title bar and tabs */
.top { background: linear-gradient(90deg, #006c94, #01739b 60%, #0278a1); color: #fff; }
.titlebar { display: flex; align-items: center; height: 14px; padding-right: 2px; }
.quick { display: flex; align-items: center; width: 558px; }
.logo { font: bold 12px/12px "Noto Sans", sans-serif; width: 25px; padding-left: 2px; }
.q { width: 13px; }
.q svg, .winmenu svg { width: 9px; height: 9px; }
.q.undo { width: 24px; gap: 4px; margin-left: 1px; }
.q.wide { width: 18px; }
.dim { color: #3085a8; }
.winmenu { gap: 1px; font: 7px/8px Lato, sans-serif; }
.winmenu .caret { margin: 0 3px 0 2px; }
.apptitle { flex: 1; font: 7px/10px Lato, sans-serif; }
.brand { font: bold 7px/8px "Open Sans", sans-serif; width: 42px; }
.wc { width: 13px; }
.wc svg { width: 8px; height: 8px; }
.tabbar { display: flex; height: 15px; align-items: center; }
.tabs { flex: 1; display: flex; gap: 1px; align-self: stretch; font: 7px/13px Lato, sans-serif; }
.tabs a { padding: 1px 8px 0; height: 14px; }
.tabs .file { padding: 1px 11px 0; }
.tabs .on { color: #d9d66f; border-bottom: 1px solid #c2b84f; }
.h { width: 14px; }
.h svg { width: 9px; height: 9px; }
.h.last { width: 15px; font: 10px/12px "Open Sans", sans-serif; }
.search { display: flex; align-items: center; width: 85px; height: 10px; margin: 0 2px; background: #fff; padding: 0 2px; }
.search input { flex: 1; min-width: 0; border: 0; padding: 0; height: 9px; background: none; font: inherit; outline: 0; }
.search input::placeholder { color: #aaa; opacity: 1; }
.search svg { width: 9px; height: 9px; }

/* ribbon */
.ribbon { display: flex; height: 47px; border-bottom: 1px solid #d9d9d9; padding-top: 2px; }
.group { display: flex; flex-direction: column; border-right: 1px solid #ddd; }
.g-insert { width: 112px; }
.g-actions { width: 40px; }
.g-operations { width: 167px; }
.g-display { width: 169px; }
.g-animation { width: 136px; }
.g-ipw { width: 79px; }
.g-feature { width: 150px; }
.g-tools { width: 52px; }
.body { flex: 1; display: grid; align-items: start; min-height: 0; }
.g-insert .body { grid-template-columns: 31px 23px 41px 15px; }
.g-operations .body { grid-template-columns: 37px 24px 31px 21px 30px 23px; }
.g-display .body { grid-template-columns: 28px 28px 29px 16px 10px 18px 24px; padding-left: 6px; column-gap: 2px; }
.g-animation .body { grid-template-columns: 54px 54px 28px; }
.g-ipw .body { grid-template-columns: 31px 20px 27px; }
.g-feature .body { grid-template-columns: 35px 38px 51px 25px; }
.rb { flex-direction: column; justify-content: flex-start; line-height: 7px; text-align: center; white-space: nowrap; height: 36px; min-width: 0; }
.rb svg { width: 20px; height: 20px; margin-bottom: 1px; }
.rb svg, .side svg { color: #666; }
.rb > .caret { margin-top: 3px; }
.caret.in { display: inline-block; margin: 0 0 1px 2px; color: #555; }
.off, .off svg { color: #c8c8c8; }
.off > .caret { color: #555; }
.stack { display: grid; grid-template-rows: 17px 17px; }
.stack svg { width: 14px; height: 14px; }
.caret.low { margin: 25px 0 0 2px; }
.arrows { display: grid; grid-auto-rows: 12px; justify-items: center; }
.arrows svg { width: 10px; height: 10px; }
.down { transform: scaleY(-1); }
.player { display: grid; grid-template-columns: 14px 11px 14px 11px; grid-auto-rows: 18px; align-items: center; padding-left: 4px; }
.player svg { width: 14px; height: 14px; }
.player .caret { justify-self: center; }
.flip { transform: scaleX(-1); }
.speed { display: flex; flex-direction: column; align-items: center; padding-top: 5px; gap: 2px; }
.speed input { width: 52px; height: 10px; margin: 0; appearance: none; background: linear-gradient(#777, #777) center / 100% 1px no-repeat; }
.speed input::-webkit-slider-thumb { appearance: none; width: 4px; height: 8px; background: #006f97; }
.group footer { display: grid; grid-template-columns: 1fr 8px; align-items: center; height: 9px; color: #2d7f94; text-align: center; }
.group footer .caret, .end { color: #555; }
.ribbon .end { margin: 39px 2px 0 auto; }

/* selection toolbar */
.toolbar { display: flex; align-items: center; height: 14px; padding: 0 2px 0 6px; border-bottom: 1px solid #ccc; }
.menu { gap: 4px; width: 42px; justify-content: flex-start; }
.burger { font: 7px/8px "DejaVu Sans", sans-serif; color: #777; }
.toolbar select {
  appearance: none; height: 11px; border: 1px solid #aaa; border-radius: 0; padding: 0 2px; font: inherit; color: inherit;
  background: linear-gradient(#444, #444) right 3px center / 3px 2px no-repeat #fff;
}
.sel1 { width: 73px; }
.sel2 { width: 77px; }
.ti, .tis svg { width: 10px; height: 10px; }
.filt { margin: 0 4px; }
.tis { display: flex; align-items: center; gap: 1px; margin-left: 2px; }
.tis button { width: 12px; height: 12px; }
.tis .caret { margin: 0 2px; }
.tis .apart { margin-left: 9px; }
.toolbar .end { margin-left: auto; }

/* workspace */
.main { flex: 1; min-height: 0; display: flex; }
.rail { width: 20px; background: #dcdcdc; border-right: 1px solid #c8c8c8; display: grid; align-content: start; grid-template-rows: 17px repeat(5, 23px 23px 24px); }
.rail svg { width: 14px; height: 14px; }
.rail button:first-child svg { width: 10px; height: 10px; }
.rail .on { background: #fff; }

.panel { width: 309px; display: flex; flex-direction: column; padding: 0 6px 7px 7px; border-right: 1px solid #ccc; }
.panel header { display: flex; align-items: center; height: 14px; gap: 2px; margin-left: -4px; }
.panel header svg { width: 9px; height: 9px; }
.panel h1 { margin: 0; flex: 1; font: inherit; }
.panel header button { width: 7px; height: 6px; border: 1px solid #333; border-top-width: 2px; }
.views { display: flex; gap: 2px; height: 22px; align-items: center; }
.views button { width: 16px; height: 16px; }
.views .box { border: 1px solid #ddd; width: 17px; height: 17px; }
.views svg { width: 15px; height: 15px; }
.tree { flex: 1; min-height: 0; border: 1px solid #ddd; border-width: 0 1px; }
table { width: 100%; height: 100%; border-collapse: collapse; table-layout: fixed; }
th { text-align: left; font-weight: normal; background: #f0f0f0; padding: 0 3px; height: 10px; }
td { padding: 0 2px; height: 10px; line-height: 8px; border-top: 1px solid #efefef; }
tbody tr:nth-child(even) { background: #f8f8f8; }
.c2 { width: 81px; }
.c3 { width: 26px; }
td:first-child, .c1 { border-right: 1px solid #444; }
td:nth-child(2), .c2 { border-right: 1px solid #e3e3e3; }
td > svg { width: 8px; height: 8px; }
.n { display: flex; align-items: center; gap: 2px; white-space: nowrap; }
.n svg { width: 8px; height: 8px; }
.n .exp { font-style: normal; width: 5px; }
.l0 { padding-left: 2px; }
.l1 { padding-left: 17px; }
.l2 { padding-left: 12px; }
.l3 { padding-left: 31px; }
.l3 b { flex: none; width: 2px; height: 8px; background: #f5bd5a; margin-right: 1px; }
.l3 { background: linear-gradient(#ccc, #ccc) 24px center / 6px 1px no-repeat, linear-gradient(#ccc, #ccc) 24px 0 / 1px 100% no-repeat; }
.hscroll { height: 10px; background: #f4f4f4; border: 1px solid #ddd; padding: 4px 9px; }
.hscroll span { display: block; width: 24px; height: 1px; background: #888; }

.view { flex: 1; min-width: 0; display: flex; flex-direction: column; background: #d4d4d4; }
.doctabs { display: flex; height: 14px; background: #fff; border-bottom: 1px solid #2b7f8f; }
.doc { display: flex; align-items: center; gap: 2px; padding: 0 12px 0 4px; }
.doc svg { width: 8px; height: 8px; }
.doc.on { background: #006088; color: #fff; padding: 0 2px; }
.doc .sm { width: 6px; height: 6px; margin-left: 2px; }
.scene { flex: 1; width: 100%; min-height: 0; }
.axis { font: 8px "Liberation Sans", sans-serif; }
.axis.small { font-size: 7px; }

.side { width: 19px; background: #fff; padding: 5px 2px 4px; display: flex; flex-direction: column; }
.side button { height: 17px; width: 15px; }
.side svg { width: 13px; height: 13px; }
.side hr { width: 14px; margin: 3px 0; border: 0; border-top: 1px solid #ddd; }
.side .caret { margin: auto 0 0 2px; }

.status { display: flex; justify-content: flex-end; align-items: center; gap: 2px; height: 10px; padding-right: 29px; border-top: 1px solid #ccc; }
.status svg { width: 8px; height: 8px; }
.taskbar { height: 5px; background: linear-gradient(90deg, #17222c, #14284a 20%, #15305e 60%, #1b2234); }
```
